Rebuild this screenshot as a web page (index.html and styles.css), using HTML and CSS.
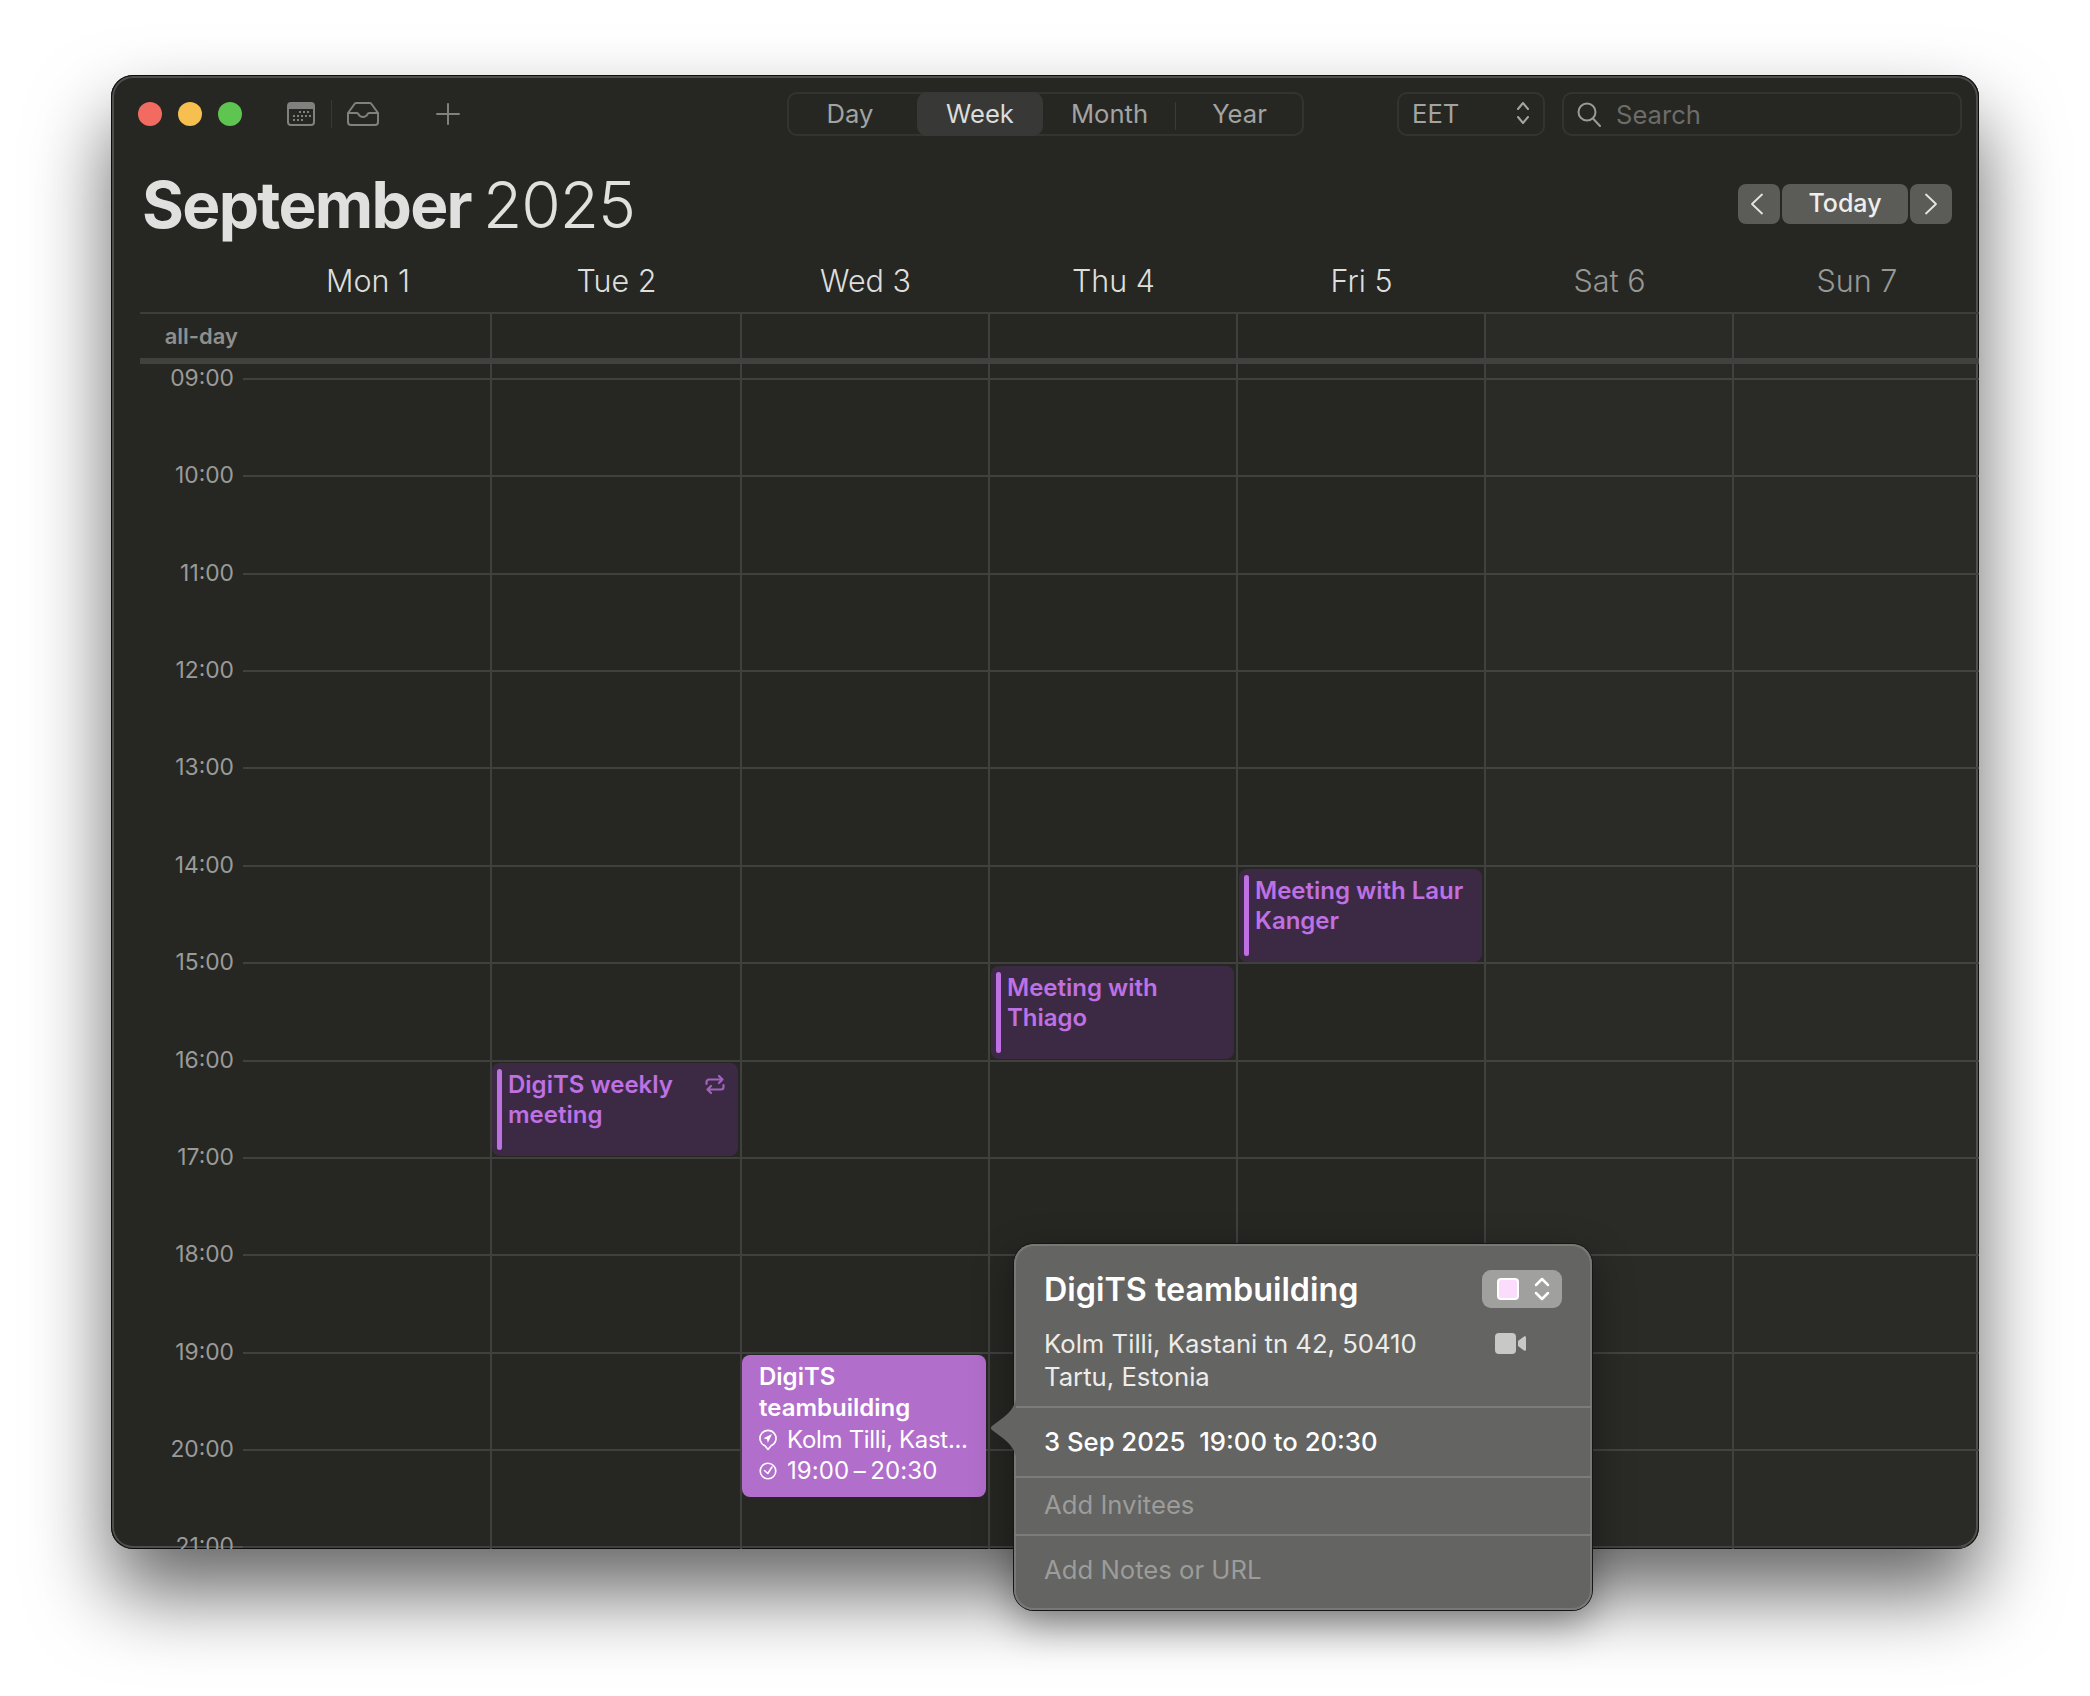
FILE: index.html
```html
<!DOCTYPE html>
<html lang="en">
<head>
    <meta charset="UTF-8">
    <meta name="viewport" content="width=device-width, initial-scale=1.0">
    <title>Calendar</title>
    <link rel="stylesheet" href="styles.css">
</head>
<body>
    <div class="window">
        <div class="toolbar">
            <div class="lights">
                <span class="light red"></span>
                <span class="light yellow"></span>
                <span class="light green"></span>
            </div>
            <svg class="icon-cal" width="28" height="24" viewBox="0 0 28 24">
                <rect x="1" y="1" width="26" height="22" rx="3" fill="none" stroke="#80807e" stroke-width="2"/>
                <path d="M1 7V4a3 3 0 0 1 3-3h20a3 3 0 0 1 3 3v3z" fill="#80807e"/>
                <g fill="#80807e">
                    <rect x="12" y="9" width="2" height="2"/><rect x="16" y="9" width="2" height="2"/><rect x="20" y="9" width="2" height="2"/>
                    <rect x="6" y="13" width="2" height="2"/><rect x="10" y="13" width="2" height="2"/><rect x="14" y="13" width="2" height="2"/><rect x="18" y="13" width="2" height="2"/><rect x="22" y="13" width="2" height="2"/>
                    <rect x="6" y="17" width="2" height="2"/><rect x="10" y="17" width="2" height="2"/><rect x="14" y="17" width="2" height="2"/>
                </g>
            </svg>
            <span class="tool-divider"></span>
            <svg class="icon-inbox" width="32" height="24" viewBox="0 0 32 24" fill="none" stroke="#80807e" stroke-width="2" stroke-linejoin="round">
                <path d="M1 11L7.500 2a2 2 0 0 1 1.600-1h13.800a2 2 0 0 1 1.600 1L31 11"/>
                <path d="M1 11h9c1 0 1.200 .6 1.600 1.400c.8 1.600 2.400 2.600 4.400 2.600s3.600-1 4.400-2.600c.4-.8 .6-1.400 1.600-1.400h9v9a3 3 0 0 1-3 3H4a3 3 0 0 1-3-3z"/>
            </svg>
            <svg class="icon-plus" width="24" height="22" viewBox="0 0 24 22" stroke="#80807e" stroke-width="2" stroke-linecap="round">
                <path d="M12 1v20M1 11h22"/>
            </svg>
            <div class="segments">
                <span class="segment seg-day">Day</span>
                <span class="segment seg-week">Week</span>
                <span class="segment seg-month">Month</span>
                <span class="segment seg-year">Year</span>
            </div>
            <div class="tz-select">
                <span>EET</span>
                <svg width="14" height="24" viewBox="0 0 14 24" fill="none" stroke="#a5a5a3" stroke-width="2" stroke-linecap="round" stroke-linejoin="round">
                    <path d="M2 8l5-6 5 6M2 16l5 6 5-6"/>
                </svg>
            </div>
            <div class="search">
                <svg width="24" height="25" viewBox="0 0 24 25" fill="none" stroke="#9a9a98" stroke-width="2" stroke-linecap="round">
                    <circle cx="10" cy="10" r="8.500"/>
                    <path d="M16 16.500l7 7.500"/>
                </svg>
                <span>Search</span>
            </div>
        </div>

        <div class="month-head">
            <h1 class="month-title"><b>September</b> 2025</h1>
            <div class="nav">
                <span class="nav-btn arrow prev">
                    <svg width="14" height="22" viewBox="0 0 14 22" fill="none" stroke="#e6e6e4" stroke-width="1.800" stroke-linecap="round" stroke-linejoin="round"><path d="M12 1.500L2 11l10 9.500"/></svg>
                </span>
                <span class="nav-btn today">Today</span>
                <span class="nav-btn arrow">
                    <svg width="14" height="22" viewBox="0 0 14 22" fill="none" stroke="#e6e6e4" stroke-width="1.800" stroke-linecap="round" stroke-linejoin="round"><path d="M2 1.500L12 11 2 20.500"/></svg>
                </span>
            </div>
        </div>

        <div class="day-heads">
            <span></span>
            <span class="day">Mon 1</span>
            <span class="day">Tue 2</span>
            <span class="day">Wed 3</span>
            <span class="day">Thu 4</span>
            <span class="day">Fri 5</span>
            <span class="day weekend">Sat 6</span>
            <span class="day weekend">Sun 7</span>
        </div>

        <div class="allday">
            <span class="allday-label">all-day</span>
            <span class="allday-cell first"></span>
            <span class="allday-cell"></span>
            <span class="allday-cell"></span>
            <span class="allday-cell"></span>
            <span class="allday-cell"></span>
            <span class="allday-cell shaded"></span>
            <span class="allday-cell shaded"></span>
        </div>

        <div class="hours">
            <div class="columns">
                <div class="col first"></div>
                <div class="col">
                    <div class="event event-weekly">
                        <span class="event-bar"></span>
                        <span class="event-title">DigiTS weekly meeting</span>
                        <svg class="repeat" width="20" height="19" viewBox="0 0 20 19" fill="none" stroke="#a062bc" stroke-width="2.200" stroke-linecap="round" stroke-linejoin="round">
                            <path d="M1.500 9V7a2.500 2.500 0 0 1 2.500-2.500h13.500M14 1l3.500 3.500L14 8"/>
                            <path d="M18.500 10v2a2.500 2.500 0 0 1-2.500 2.500H2.500M6 11l-3.500 3.500L6 18"/>
                        </svg>
                    </div>
                </div>
                <div class="col">
                    <div class="event-selected">
                        <div class="selected-title">DigiTS teambuilding</div>
                        <div class="selected-line">
                            <svg width="18" height="22" viewBox="0 0 18 22" fill="none" stroke="#fff" stroke-width="1.600" stroke-linejoin="round">
                                <path d="M9 20.500l-3-3.700A8 8 0 1 1 12 16.800z"/>
                                <path d="M13 5L8.800 14l-.8-3.700L4.500 9.200z" fill="#fff" stroke="none"/>
                            </svg>
                            <span>Kolm Tilli, Kast...</span>
                        </div>
                        <div class="selected-line">
                            <svg width="18" height="22" viewBox="0 0 18 22" fill="none" stroke="#fff" stroke-width="1.600" stroke-linecap="round" stroke-linejoin="round">
                                <circle cx="9" cy="11" r="7.800"/>
                                <path d="M5.500 10.500l3.300 3L13 7"/>
                            </svg>
                            <span class="selected-time">19:00&thinsp;–&thinsp;20:30</span>
                        </div>
                    </div>
                </div>
                <div class="col">
                    <div class="event event-thiago">
                        <span class="event-bar"></span>
                        <span class="event-title">Meeting with Thiago</span>
                    </div>
                </div>
                <div class="col">
                    <div class="event event-laur">
                        <span class="event-bar"></span>
                        <span class="event-title">Meeting with Laur Kanger</span>
                    </div>
                </div>
                <div class="col shaded"></div>
                <div class="col shaded"></div>
            </div>
            <div class="hour"><span class="hour-label">09:00</span><span class="hour-line"></span></div>
            <div class="hour"><span class="hour-label">10:00</span><span class="hour-line"></span></div>
            <div class="hour"><span class="hour-label">11:00</span><span class="hour-line"></span></div>
            <div class="hour"><span class="hour-label">12:00</span><span class="hour-line"></span></div>
            <div class="hour"><span class="hour-label">13:00</span><span class="hour-line"></span></div>
            <div class="hour"><span class="hour-label">14:00</span><span class="hour-line"></span></div>
            <div class="hour"><span class="hour-label">15:00</span><span class="hour-line"></span></div>
            <div class="hour"><span class="hour-label">16:00</span><span class="hour-line"></span></div>
            <div class="hour"><span class="hour-label">17:00</span><span class="hour-line"></span></div>
            <div class="hour"><span class="hour-label">18:00</span><span class="hour-line"></span></div>
            <div class="hour"><span class="hour-label">19:00</span><span class="hour-line"></span></div>
            <div class="hour"><span class="hour-label">20:00</span><span class="hour-line"></span></div>
            <div class="hour"><span class="hour-label">21:00</span><span class="hour-line"></span></div>
        </div>

        <div class="popover">
            <svg class="popover-arrow" width="26" height="58" viewBox="0 0 26 58">
                <path d="M26 0C24 8 20 13 14 18L2 27c-1.500 1.200-1.500 2.800 0 4l12 9c6 5 10 10 12 18z" fill="#646462"/>
            </svg>
            <div class="pop-section pop-main">
                <div class="pop-title-row">
                    <span class="pop-title">DigiTS teambuilding</span>
                    <span class="color-btn">
                        <span class="swatch"></span>
                        <svg width="16" height="24" viewBox="0 0 16 24" fill="none" stroke="#fff" stroke-width="2.500" stroke-linecap="round" stroke-linejoin="round">
                            <path d="M2 8l6-6 6 6M2 16l6 6 6-6"/>
                        </svg>
                    </span>
                </div>
                <div class="pop-location-row">
                    <span class="pop-location">Kolm Tilli, Kastani tn 42, 50410<br>Tartu, Estonia</span>
                    <svg class="video" width="31" height="21" viewBox="0 0 31 21" fill="#c8c8c6">
                        <rect x="0" y="0" width="21" height="21" rx="4"/>
                        <path d="M23 8l6-4.500c.8-.5 2-.2 2 1v12c0 1.200-1.200 1.500-2 1l-6-4.500z"/>
                    </svg>
                </div>
            </div>
            <div class="pop-section pop-date">3 Sep 2025&nbsp;&nbsp;19:00 to 20:30</div>
            <div class="pop-section pop-add invitees">Add Invitees</div>
            <div class="pop-section pop-add notes">Add Notes or URL</div>
        </div>
    </div>
</body>
</html>
```

FILE: styles.css
```css
* {
    box-sizing: border-box;
}
body {
    margin: 0;
    width: 2090px;
    height: 1696px;
    overflow: hidden;
    background-color: #fff;
    font-family: Inter, "Noto Sans", sans-serif;
    padding: 75px 0 0 111px;
}
.window {
    position: relative;
    width: 1868px;
    height: 1474px;
    background-color: #262723;
    border-radius: 22px;
    box-shadow: inset 0 0 0 1px #0c0c0c, inset 0 0 0 3px #4e4e4c, 0 44px 80px rgba(0, 0, 0, 0.6);
    display: flex;
    flex-direction: column;
}

/* toolbar */
.toolbar {
    display: flex;
    align-items: center;
    height: 44px;
    margin-top: 17px;
    padding-left: 27px;
}
.lights {
    display: flex;
    gap: 16px;
}
.light {
    width: 24px;
    height: 24px;
    border-radius: 50%;
}
.red { background-color: #f26b60; }
.yellow { background-color: #f6bf4f; }
.green { background-color: #5ec550; }
.icon-cal {
    margin-left: 45px;
}
.tool-divider {
    width: 1px;
    height: 28px;
    background-color: #383836;
    margin-left: 16px;
}
.icon-inbox {
    margin-left: 15px;
}
.icon-plus {
    margin-left: 57px;
}
.segments {
    display: flex;
    width: 517px;
    height: 44px;
    margin-left: 327px;
    border: 2px solid #333431;
    border-radius: 10px;
}
.segment {
    margin: -2px 0;
    padding-bottom: 2px;
    display: flex;
    align-items: center;
    justify-content: center;
    font-size: 25.6px;
    color: #a3a3a1;
    position: relative;
}
.seg-day {
    width: 128px;
    padding-right: 6px;
}
.seg-week {
    width: 126px;
    background-color: #383936;
    border-radius: 10px;
    color: #dcdcda;
}
.seg-month {
    width: 132px;
    padding-left: 1px;
}
.seg-year {
    flex: 1;
    padding-left: 2px;
}
.seg-year::before {
    content: "";
    position: absolute;
    left: 0;
    top: 10px;
    height: 28px;
    width: 1px;
    background-color: #3b3b39;
}
.tz-select {
    display: flex;
    align-items: center;
    justify-content: space-between;
    width: 148px;
    height: 44px;
    margin-left: 93px;
    padding: 0 13px 2px 13px;
    border: 2px solid #333431;
    border-radius: 10px;
    font-size: 25.6px;
    color: #a3a3a1;
}
.search {
    display: flex;
    align-items: center;
    gap: 15px;
    width: 400px;
    height: 44px;
    margin-left: 17px;
    padding-left: 13px;
    border: 2px solid #333431;
    border-radius: 10px;
    font-size: 25.6px;
    color: #6c6c6a;
}

/* month heading */
.month-head {
    display: flex;
    align-items: center;
    justify-content: space-between;
    height: 80px;
    margin-top: 28px;
    padding: 0 27px 0 31px;
}
.month-title {
    margin: 0;
    font-size: 64px;
    font-weight: 300;
    letter-spacing: -1px;
    word-spacing: -5px;
    color: #e0e0de;
}
.month-title b {
    font-weight: 700;
    letter-spacing: -1.7px;
}
.nav {
    display: flex;
    gap: 2px;
}
.nav-btn {
    display: flex;
    align-items: center;
    justify-content: center;
    height: 40px;
    background-color: #5b5c58;
    border-radius: 8px;
    color: #eeeeec;
    font-size: 25px;
    font-weight: 500;
}
.arrow {
    width: 42px;
}
.prev svg {
    margin-right: 4px;
}
.today {
    width: 126px;
    padding-bottom: 2px;
}

/* week header */
.day-heads {
    display: grid;
    grid-template-columns: 103px 247px 250px repeat(4, 248px) 1fr;
    height: 70px;
    margin-left: 29px;
    padding: 6px 0 2px;
    border-bottom: 2px solid #3d3d3b;
}
.day {
    display: flex;
    align-items: center;
    justify-content: center;
    padding-left: 3px;
    font-size: 30.5px;
    font-weight: 300;
    color: #dededc;
}
.weekend {
    color: #979795;
}
.allday {
    display: grid;
    grid-template-columns: 103px 247px 250px repeat(4, 248px) 1fr;
    height: 50px;
    margin-left: 29px;
    border-bottom: 6px solid #414140;
}
.allday-label {
    display: flex;
    align-items: center;
    justify-content: flex-end;
    padding-right: 5px;
    font-size: 22px;
    font-weight: 600;
    color: #8f8f8d;
}
.allday-cell {
    border-left: 2px solid #40403e;
}
.allday-cell.first {
    border-left: none;
}
.shaded {
    background-color: rgba(255, 255, 255, 0.02);
}

/* hour grid */
.hours {
    position: relative;
    flex: 1;
    margin-left: 29px;
    padding-top: 14px;
    overflow: hidden;
    border-radius: 0 0 22px 0;
}
.columns {
    position: absolute;
    z-index: 1;
    top: 0;
    bottom: 0;
    left: 103px;
    right: 0;
    display: grid;
    grid-template-columns: 247px 250px repeat(4, 248px) 1fr;
}
.col {
    position: relative;
    border-left: 2px solid #40403e;
}
.col.first {
    border-left: none;
}
.hour {
    display: grid;
    grid-template-columns: 103px 1fr;
    height: 97.36px;
}
.hour-label {
    height: 26px;
    margin-top: -13px;
    padding-right: 9px;
    text-align: right;
    font-size: 22.8px;
    line-height: 26px;
    color: #9a9a98;
}
.hour-line {
    height: 2px;
    background-color: #40403e;
}

/* events, placed by their time in the column */
.event {
    position: absolute;
    display: flex;
    height: 93px;
    padding: 6px 6px 6px 5px;
    background-color: #3c2a45;
    border-radius: 8px;
    font-size: 24px;
    font-weight: 600;
    line-height: 30px;
    color: #bf70e2;
}
.event-weekly {
    top: 699px;
    left: 0;
    width: 246px;
}
.event-thiago {
    top: 602px;
    left: 1px;
    width: 243px;
}
.event-laur {
    top: 505px;
    left: 1px;
    width: 243px;
}
.event-bar {
    flex: none;
    width: 5px;
    border-radius: 3px;
    background-color: #bf70e2;
}
.event-title {
    margin-left: 6px;
    padding-top: 1px;
}
.repeat {
    position: absolute;
    top: 12px;
    right: 13px;
}
.event-selected {
    position: absolute;
    top: 991px;
    left: 0;
    width: 244px;
    height: 142px;
    padding: 6px 10px 0 17px;
    background-color: #b16ecb;
    border-radius: 8px;
    font-size: 24px;
    line-height: 31px;
    color: #fff;
}
.selected-title {
    font-weight: 600;
    margin-bottom: 1px;
}
.selected-line {
    display: flex;
    align-items: center;
    gap: 10px;
    white-space: nowrap;
    letter-spacing: -0.3px;
}
.selected-line svg {
    flex: none;
}
.selected-time {
    letter-spacing: 0.1px;
}

/* popover */
.popover {
    position: absolute;
    z-index: 2;
    left: 903px;
    top: 1169px;
    width: 578px;
    height: 366px;
    background-color: #646462;
    border-radius: 20px;
    box-shadow: inset 0 0 0 2px #787876, 0 0 0 1px #161616, 0 14px 40px rgba(0, 0, 0, 0.4);
    color: #fff;
    font-size: 25.7px;
}
.popover-arrow {
    position: absolute;
    left: -24px;
    top: 155px;
}
.pop-section {
    padding: 0 30px;
    border-bottom: 2px solid #7c7c7a;
}
.pop-main {
    height: 164px;
    padding-top: 23px;
}
.pop-title-row {
    display: flex;
    align-items: center;
    justify-content: space-between;
    height: 44px;
}
.pop-title {
    font-size: 32.300px;
    font-weight: 600;
}
.color-btn {
    display: flex;
    align-items: center;
    gap: 15px;
    width: 80px;
    height: 38px;
    padding-left: 15px;
    background-color: #a0a09e;
    border-radius: 9px;
}
.swatch {
    width: 22px;
    height: 22px;
    border-radius: 4px;
    border: 2px solid #fff;
    background-color: #fcdcfc;
}
.pop-location-row {
    display: flex;
    justify-content: space-between;
    align-items: flex-start;
    margin-top: 17px;
    line-height: 32.500px;
    color: #ececea;
}
.video {
    margin: 5px 36px 0 0;
}
.pop-date {
    display: flex;
    align-items: center;
    height: 70px;
    padding-bottom: 2px;
    font-weight: 500;
}
.pop-add {
    display: flex;
    align-items: center;
    padding-bottom: 4px;
    color: #9c9c9a;
}
.invitees {
    height: 58px;
}
.notes {
    height: 72px;
    padding-bottom: 6px;
    border-bottom: none;
}
```
